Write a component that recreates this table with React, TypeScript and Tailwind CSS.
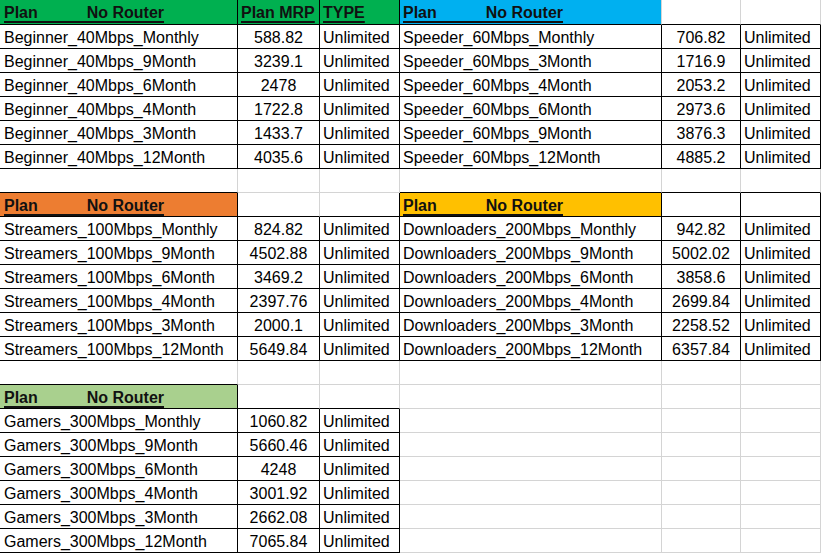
import React from "react";

type Cell = { t?: string; kind?: "num" | "txt" | "hdr" | "hdrPlan"; bg?: string };

const G = "bg-[#00b050]";
const B = "bg-[#00b0f0]";
const O = "bg-[#ed7d31]";
const Y = "bg-[#ffc000]";
const LG = "bg-[#a9d08e]";

const empty: Cell = {};
const plan = (bg: string): Cell => ({ kind: "hdrPlan", bg });

const pair = (a: [string, string], b?: [string, string]): Cell[] => [
  { t: a[0], kind: "txt" },
  { t: a[1], kind: "num" },
  { t: "Unlimited", kind: "txt" },
  ...(b
    ? [
        { t: b[0], kind: "txt" } as Cell,
        { t: b[1], kind: "num" } as Cell,
        { t: "Unlimited", kind: "txt" } as Cell,
      ]
    : [empty, empty, empty]),
];

const rows: Cell[][] = [
  [plan(G), { t: "Plan MRP", kind: "hdr", bg: G }, { t: "TYPE", kind: "hdr", bg: G }, plan(B), empty, empty],
  pair(["Beginner_40Mbps_Monthly", "588.82"], ["Speeder_60Mbps_Monthly", "706.82"]),
  pair(["Beginner_40Mbps_9Month", "3239.1"], ["Speeder_60Mbps_3Month", "1716.9"]),
  pair(["Beginner_40Mbps_6Month", "2478"], ["Speeder_60Mbps_4Month", "2053.2"]),
  pair(["Beginner_40Mbps_4Month", "1722.8"], ["Speeder_60Mbps_6Month", "2973.6"]),
  pair(["Beginner_40Mbps_3Month", "1433.7"], ["Speeder_60Mbps_9Month", "3876.3"]),
  pair(["Beginner_40Mbps_12Month", "4035.6"], ["Speeder_60Mbps_12Month", "4885.2"]),
  [empty, empty, empty, empty, empty, empty],
  [plan(O), empty, empty, plan(Y), empty, empty],
  pair(["Streamers_100Mbps_Monthly", "824.82"], ["Downloaders_200Mbps_Monthly", "942.82"]),
  pair(["Streamers_100Mbps_9Month", "4502.88"], ["Downloaders_200Mbps_9Month", "5002.02"]),
  pair(["Streamers_100Mbps_6Month", "3469.2"], ["Downloaders_200Mbps_6Month", "3858.6"]),
  pair(["Streamers_100Mbps_4Month", "2397.76"], ["Downloaders_200Mbps_4Month", "2699.84"]),
  pair(["Streamers_100Mbps_3Month", "2000.1"], ["Downloaders_200Mbps_3Month", "2258.52"]),
  pair(["Streamers_100Mbps_12Month", "5649.84"], ["Downloaders_200Mbps_12Month", "6357.84"]),
  [empty, empty, empty, empty, empty, empty],
  [plan(LG), empty, empty, empty, empty, empty],
  pair(["Gamers_300Mbps_Monthly", "1060.82"]),
  pair(["Gamers_300Mbps_9Month", "5660.46"]),
  pair(["Gamers_300Mbps_6Month", "4248"]),
  pair(["Gamers_300Mbps_4Month", "3001.92"]),
  pair(["Gamers_300Mbps_3Month", "2662.08"]),
  pair(["Gamers_300Mbps_12Month", "7065.84"]),
];

function inTable(r: number, c: number): boolean {
  if (r < 0 || c < 0 || c > 5 || r >= rows.length) return false;
  if (r === 0) return c <= 2;
  if (r >= 1 && r <= 6) return true;
  if (r === 8) return c === 0 || c >= 3;
  if (r >= 9 && r <= 14) return true;
  if (r === 16) return c === 0;
  if (r >= 17) return c <= 2;
  return false;
}

export default function App() {
  return (
    <div
      className="w-[821px] h-[553px] bg-white overflow-hidden text-black"
      style={{ fontFamily: '"Liberation Sans", Arial, sans-serif' }}
    >
      <div className="grid grid-cols-[238px_82px_80px_262px_79px_80px] text-[16px]">
        {rows.map((row, r) =>
          row.map((cell, c) => {
            const rk = inTable(r, c) || inTable(r, c + 1);
            const bk = inTable(r, c) || inTable(r + 1, c);
            const rb = rk ? "border-r-black" : "border-r-[#d4d4d4]";
            const bb = bk ? "border-b-black" : "border-b-[#d4d4d4]";
            const bg = cell.bg ?? "bg-white";
            const h = r === 0 ? "h-[25px] pt-px" : "h-6 pt-[2px]";
            let content: React.ReactNode = null;
            if (cell.kind === "hdrPlan") {
              content = (
                <span className="font-bold underline decoration-[1.5px] underline-offset-[3px] whitespace-pre text-[#111]">
                  {"Plan           No Router"}
                </span>
              );
            } else if (cell.kind === "hdr") {
              content = (
                <span className="font-bold underline decoration-[1.5px] underline-offset-[3px] whitespace-pre text-[#111]">
                  {cell.t}
                </span>
              );
            } else if (cell.t) {
              content = <span className="whitespace-pre">{cell.t}</span>;
            }
            const align =
              cell.kind === "num" ? "justify-center" : c === 0 ? "pl-[4px]" : "pl-[3px]";
            return (
              <div
                key={`${r}-${c}`}
                className={`${h} flex items-center border-r border-b ${rb} ${bb} ${bg} ${align} leading-[20px] overflow-hidden`}
              >
                {content}
              </div>
            );
          })
        )}
      </div>
    </div>
  );
}
